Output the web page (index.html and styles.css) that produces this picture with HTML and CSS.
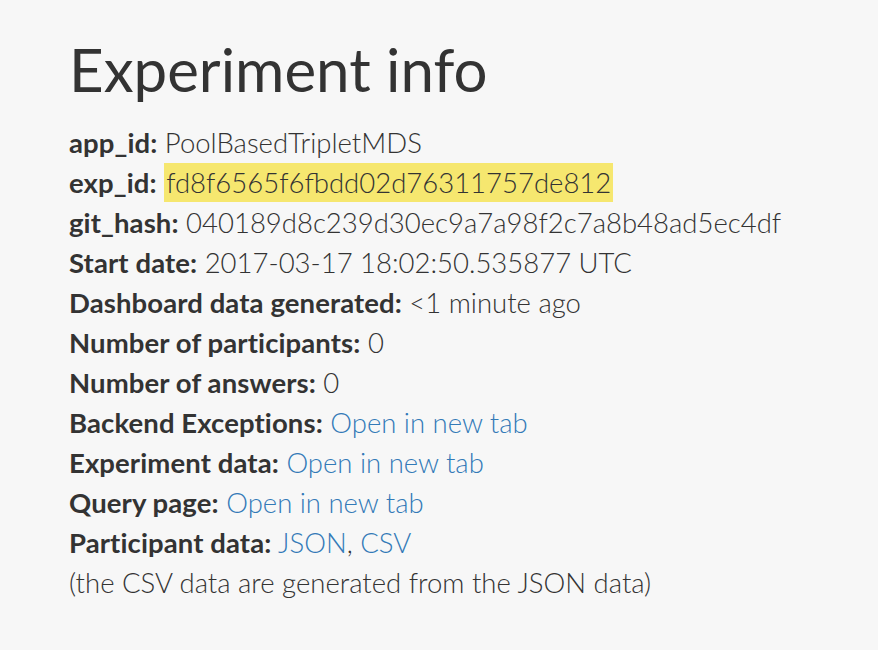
FILE: index.html
```html
<!DOCTYPE html>
<html>
<head>
<meta charset="utf-8">
<link rel="stylesheet" href="styles.css">
</head>
<body>
<div class="container">
  <h1 class="title">Experiment info</h1>
  <div class="info">
    <div class="row"><b>app_id:</b> PoolBasedTripletMDS</div>
    <div class="row"><b>exp_id:</b> <mark class="hl">fd8f6565f6fbdd02d76311757de812</mark></div>
    <div class="row"><b>git_hash:</b> 040189d8c239d30ec9a7a98f2c7a8b48ad5ec4df</div>
    <div class="row"><b>Start date:</b> 2017-03-17 18:02:50.535877 UTC</div>
    <div class="row"><b>Dashboard data generated:</b> &lt;1 minute ago</div>
    <div class="row"><b>Number of participants:</b> 0</div>
    <div class="row"><b>Number of answers:</b> 0</div>
    <div class="row"><b>Backend Exceptions:</b> <a class="link" href="#">Open in new tab</a></div>
    <div class="row"><b>Experiment data:</b> <a class="link" href="#">Open in new tab</a></div>
    <div class="row"><b>Query page:</b> <a class="link" href="#">Open in new tab</a></div>
    <div class="row"><b>Participant data:</b> <a class="link" href="#">JSON</a>, <a class="link" href="#">CSV</a></div>
    <div class="row">(the CSV data are generated from the JSON data)</div>
  </div>
</div>
</body>
</html>
```

FILE: styles.css
```css
html, body {
  margin: 0;
  padding: 0;
  background: #f7f7f7;
}
body {
  font-family: "Lato Light", Lato, "Open Sans", sans-serif;
  color: #333;
  font-weight: 300;
  font-size: 27.5px;
  line-height: 40px;
}
.container {
  padding: 36px 0 0 69px;
}
.title {
  font-family: Lato, "Open Sans", sans-serif;
  font-size: 60px;
  font-weight: 400;
  line-height: 66px;
  margin: 0 0 21px 0;
}
.info b {
  font-family: Lato, "Open Sans", sans-serif;
  font-weight: 700;
  letter-spacing: 0.1px;
}
.hl {
  background: #f6e76f;
  color: #333;
  padding: 3px 2px;
}
.link {
  color: #337ab7;
  text-decoration: none;
}
```
